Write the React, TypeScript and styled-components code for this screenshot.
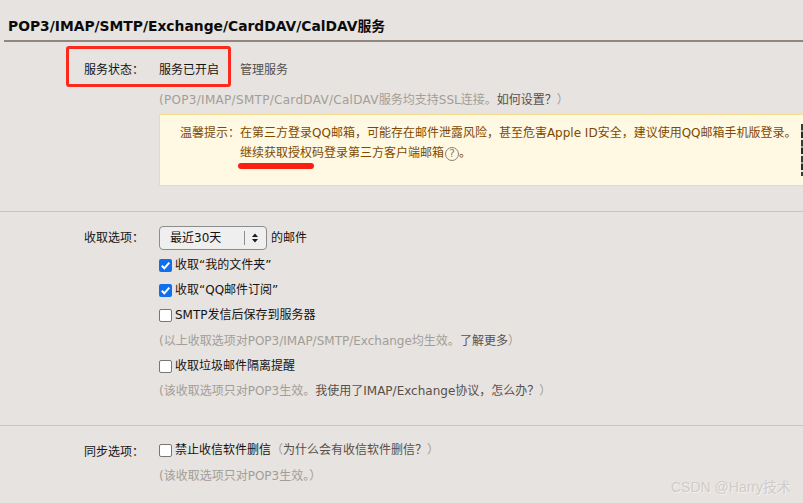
import React from 'react';
import styled, { createGlobalStyle } from 'styled-components';

const GlobalStyle = createGlobalStyle`
  html, body {
    margin: 0;
    padding: 0;
    background: #e7e3e0;
    overflow: hidden;
  }
`;

const Page = styled.div`
  position: relative;
  width: 803px;
  height: 503px;
  overflow: hidden;
  background: #e7e3e0;
  color: #141414;
  font-family: "DejaVu Sans", "Noto Sans CJK SC", sans-serif;
  font-size: 12px;
  line-height: 18px;
`;

const Title = styled.h2`
  margin: 0 0 0 4px;
  height: 42px;
  box-sizing: border-box;
  padding: 17px 0 0 4px;
  border-bottom: 2px solid #91877d;
  font-size: 13.85px;
  line-height: 18px;
  font-weight: bold;
  color: #0b0b0b;
  white-space: nowrap;
`;

const Section = styled.section<{ $top: number; $height: number; $ruled?: boolean }>`
  box-sizing: border-box;
  padding-top: ${p => p.$top}px;
  height: ${p => p.$height}px;
  border-bottom: ${p => (p.$ruled ? '1px solid #c9c4bf' : 'none')};
`;

const Row = styled.div<{ $height?: number }>`
  display: flex;
  align-items: center;
  height: ${p => p.$height || 18}px;
  padding-left: 84px;
  white-space: nowrap;
`;

const Label = styled.div<{ $drop?: number }>`
  width: 75px;
  flex: none;
  margin-top: ${p => p.$drop || 0}px;
`;

const Action = styled.span`
  margin-left: 21px;
  color: #555048;
`;

const Hint = styled.span`
  color: #a39d97;
`;

const HintLink = styled.span`
  color: #57504a;
`;

const WideLatin = styled.span`
  letter-spacing: 0.3px;
`;

const Notice = styled.div`
  box-sizing: border-box;
  margin: 5px 0 0 159px;
  width: 660px;
  height: 72px;
  padding: 8px 0 0 20px;
  display: flex;
  background: #fff8e3;
  border: 1px solid #f7dc8f;
  color: #7d4a00;
  line-height: 20px;
  white-space: nowrap;
`;

const NoticeLabel = styled.div`
  width: 60px;
  flex: none;
`;

const HelpIcon = styled.span`
  display: inline-block;
  box-sizing: border-box;
  width: 14px;
  height: 14px;
  margin-left: 1px;
  border: 1px solid #8d8172;
  border-radius: 50%;
  color: #8d8172;
  font-size: 11px;
  line-height: 12px;
  text-align: center;
  vertical-align: 0;
`;

const SelectBox = styled.div`
  box-sizing: border-box;
  display: flex;
  align-items: center;
  width: 108px;
  height: 24px;
  padding-left: 10px;
  background: #efefef;
  border: 1px solid #8c8c8c;
  border-radius: 4px;
`;

const SelectText = styled.span`
  width: 74px;
`;

const SelectDivider = styled.span`
  width: 1px;
  height: 14px;
  background: #8c8c8c;
`;

const SelectArrows = styled.svg`
  margin-left: 6px;
`;

const SelectTail = styled.span`
  margin-left: 4px;
`;

const Field = styled.div`
  display: flex;
  align-items: center;
  margin-left: 159px;
  height: 18px;
  white-space: nowrap;
`;

const CheckBox = styled.span<{ $on?: boolean }>`
  box-sizing: border-box;
  display: inline-flex;
  align-items: center;
  justify-content: center;
  flex: none;
  width: 13px;
  height: 13px;
  margin-right: 3px;
  border-radius: 2px;
  background: ${p => (p.$on ? '#0f6fec' : '#fff')};
  border: ${p => (p.$on ? 'none' : '1px solid #767676')};
`;

const HintLine = styled.div<{ $top: number }>`
  margin: ${p => p.$top}px 0 0 159px;
  height: 18px;
  white-space: nowrap;
`;

const Stack = styled.div<{ $top: number }>`
  margin-top: ${p => p.$top}px;
`;

const Scrap = styled.div`
  position: absolute;
  left: 801px;
  top: 124px;
  width: 2px;
  height: 52px;
  background: repeating-linear-gradient(#3a3a3a 0 6px, #9a9a9a 6px 8px, #2a2a2a 8px 14px, #e8e8e8 14px 16px);
`;

const RedBox = styled.div`
  position: absolute;
  left: 66px;
  top: 46px;
  width: 165px;
  height: 41px;
  box-sizing: border-box;
  border: 3px solid #fb2a1c;
  border-radius: 3px;
`;

const RedLine = styled.div`
  position: absolute;
  left: 238px;
  top: 163px;
  width: 76px;
  height: 6px;
  border-radius: 3px;
  background: #fb1f10;
`;

const Watermark = styled.div`
  position: absolute;
  left: 671px;
  top: 477px;
  color: #cfccc9;
  font-family: "Liberation Sans", "Noto Sans CJK SC", sans-serif;
  font-size: 14px;
  line-height: 20px;
  white-space: nowrap;
  text-shadow: 1px 1px 0 #f3f1ef;
`;

const Check = ({ on }: { on?: boolean }) => (
  <CheckBox $on={on}>
    {on && (
      <svg width="11" height="11" viewBox="0 0 11 11">
        <path d="M1.8 5.8 L4.3 8.3 L9.3 2.6" fill="none" stroke="#fff" strokeWidth="2" />
      </svg>
    )}
  </CheckBox>
);

export default function App() {
  return (
    <Page>
      <GlobalStyle />
      <Title>POP3/IMAP/SMTP/Exchange/CardDAV/CalDAV服务</Title>

      <Section $top={19} $height={170} $ruled>
        <Row>
          <Label>服务状态：</Label>
          <span>服务已开启</span>
          <Action>管理服务</Action>
        </Row>
        <HintLine $top={12}>
          <Hint>
            <WideLatin>(POP3/IMAP/SMTP/CardDAV/CalDAV</WideLatin>服务均支持SSL连接。<HintLink>如何设置？</HintLink>）
          </Hint>
        </HintLine>
        <Notice>
          <NoticeLabel>温馨提示：</NoticeLabel>
          <div>
            在第三方登录QQ邮箱，可能存在邮件泄露风险，甚至危害Apple ID安全，建议使用QQ邮箱手机版登录。
            <br />
            继续获取授权码登录第三方客户端邮箱<HelpIcon>?</HelpIcon>。
          </div>
        </Notice>
      </Section>

      <Section $top={14} $height={214} $ruled>
        <Row $height={24}>
          <Label>收取选项：</Label>
          <SelectBox>
            <SelectText>最近30天</SelectText>
            <SelectDivider />
            <SelectArrows width="8" height="10" viewBox="0 0 8 10">
              <path d="M4 0.5 L7 4 L1 4 Z M4 9.5 L1 6 L7 6 Z" fill="#1a1a1a" />
            </SelectArrows>
          </SelectBox>
          <SelectTail>的邮件</SelectTail>
        </Row>
        <Stack $top={6}>
          <Field><Check on />收取“我的文件夹”</Field>
        </Stack>
        <Stack $top={7}>
          <Field><Check on />收取“QQ邮件订阅”</Field>
        </Stack>
        <Stack $top={7}>
          <Field><Check />SMTP发信后保存到服务器</Field>
        </Stack>
        <HintLine $top={8}>
          <Hint>
            (以上收取选项对POP3/IMAP/SMTP/Exchange均生效。<HintLink>了解更多</HintLink>）
          </Hint>
        </HintLine>
        <Stack $top={7}>
          <Field><Check />收取垃圾邮件隔离提醒</Field>
        </Stack>
        <HintLine $top={7}>
          <Hint>
            (该收取选项只对POP3生效。<HintLink>我使用了IMAP/Exchange协议，怎么办？</HintLink>）
          </Hint>
        </HintLine>
      </Section>

      <Section $top={15} $height={77}>
        <Row>
          <Label $drop={3}>同步选项：</Label>
          <Check />
          <span>禁止收信软件删信</span>
          <Hint>（<HintLink>为什么会有收信软件删信？</HintLink>）</Hint>
        </Row>
        <HintLine $top={8}>
          <Hint>(该收取选项只对POP3生效。）</Hint>
        </HintLine>
      </Section>

      <Scrap />
      <RedBox />
      <RedLine />
      <Watermark>CSDN @Harry技术</Watermark>
    </Page>
  );
}
